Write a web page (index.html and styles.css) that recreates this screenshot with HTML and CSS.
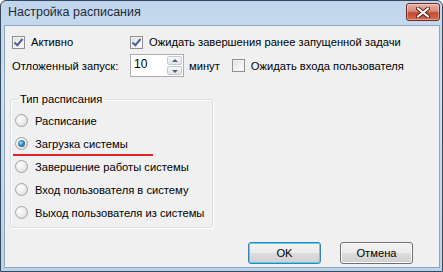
FILE: index.html
```html
<!DOCTYPE html>
<html lang="ru">
<head>
  <meta charset="UTF-8">
  <title>Настройка расписания</title>
  <link rel="stylesheet" href="styles.css">
</head>
<body>

  <div class="window">
    <!-- Заголовок окна -->
    <div class="titlebar">
      <span class="title">Настройка расписания</span>
      <div class="close-btn">
        <svg width="14" height="11" viewBox="0 0 14 11">
          <path d="M2 1.5 L12 9.5 M12 1.5 L2 9.5" stroke="#5a2019" stroke-width="4" stroke-linecap="round"/>
          <path d="M2 1.5 L12 9.5 M12 1.5 L2 9.5" stroke="#fff" stroke-width="2.2" stroke-linecap="round"/>
        </svg>
      </div>
    </div>

    <div class="client">
      <div class="row row-top">
        <label class="item item-first"><span class="checkbox checked"></span>Активно</label>
        <label class="item"><span class="checkbox checked"></span>Ожидать завершения ранее запущенной задачи</label>
      </div>

      <div class="row row-delay">
        <span class="item-first">Отложенный запуск:</span>
        <div class="spinner">
          <span class="spin-value">10</span>
          <div class="spin-buttons">
            <span class="spin-up"></span>
            <span class="spin-down"></span>
          </div>
        </div>
        <span class="unit">минут</span>
        <label class="item"><span class="checkbox"></span>Ожидать входа пользователя</label>
      </div>

      <fieldset class="group">
        <legend>Тип расписания</legend>
        <label class="radio-row"><span class="radio"></span>Расписание</label>
        <label class="radio-row marked"><span class="radio selected"></span>Загрузка системы</label>
        <label class="radio-row"><span class="radio"></span>Завершение работы системы</label>
        <label class="radio-row"><span class="radio"></span>Вход пользователя в систему</label>
        <label class="radio-row"><span class="radio"></span>Выход пользователя из системы</label>
      </fieldset>

      <div class="buttons">
        <button class="btn btn-default">OK</button>
        <button class="btn">Отмена</button>
      </div>
    </div>
  </div>

</body>
</html>
```

FILE: styles.css
```css
/* Окно в стиле Windows 7 */
body {
  margin: 0;
  padding: 0;
  background-color: #fff;
  font-family: "Liberation Sans", Arial, sans-serif;
  font-size: 11.2px;
  color: #000;
}

.window {
  width: 443px;
  height: 272px;
  box-sizing: border-box;
  border: 1px solid #34495e;
  border-radius: 6px 6px 0 0;
  background: linear-gradient(to bottom, #c0d5ec 0%, #cfdff1 30%, #bcd2ea 100%);
  display: flex;
  flex-direction: column;
}

.titlebar {
  height: 24px;
  display: flex;
  align-items: center;
  justify-content: space-between;
  padding: 0 2px 0 7px;
}

.title {
  font-size: 12.5px;
  color: #1e2b38;
  margin-top: -2px;
}

.close-btn {
  width: 32px;
  height: 16px;
  margin-top: -2px;
  border: 1px solid #6b2a22;
  border-radius: 3px;
  background: linear-gradient(to bottom, #e8b1a5 0%, #d98877 45%, #c34a34 55%, #d46b4f 100%);
  display: flex;
  align-items: center;
  justify-content: center;
  box-shadow: inset 0 0 0 1px rgba(255, 255, 255, 0.35);
}

.client {
  flex: 1;
  margin: 0 2px 3px 3px;
  border: 1px solid #8da6bf;
  background-color: #f0f0f0;
  padding: 8px 0 0 5px;
  display: flex;
  flex-direction: column;
}

.row {
  display: flex;
  align-items: center;
  padding-left: 2px;
}

.row-top {
  height: 14px;
  margin-top: 1px;
}

.row-delay {
  height: 23px;
  margin-top: 5px;
}

.item {
  display: flex;
  align-items: center;
  white-space: nowrap;
}

.item-first {
  width: 118px;
  flex-shrink: 0;
}

.checkbox {
  width: 11px;
  height: 11px;
  border: 1px solid #8e8f8f;
  background: linear-gradient(135deg, #dcdcdc 0%, #f6f6f6 70%, #fff 100%);
  box-shadow: inset 0 0 0 1px #f4f4f4;
  margin-right: 6px;
  position: relative;
}

.checkbox.checked::after {
  content: "";
  position: absolute;
  left: 3px;
  top: 0px;
  width: 3px;
  height: 7px;
  border: solid #4c61a0;
  border-width: 0 2px 2px 0;
  transform: rotate(40deg);
}

.spinner {
  width: 52px;
  height: 21px;
  border: 1px solid #abadb3;
  background-color: #fff;
  display: flex;
  justify-content: space-between;
}

.spin-value {
  padding: 2px 0 0 3px;
  font-size: 12px;
}

.spin-buttons {
  width: 15px;
  display: flex;
  flex-direction: column;
  padding: 1px;
  gap: 1px;
}

.spin-up,
.spin-down {
  flex: 1;
  border: 1px solid #c4c8cf;
  border-radius: 2px;
  background: linear-gradient(to bottom, #f7f7f7, #e1e3e7);
  position: relative;
}

.spin-up::after,
.spin-down::after {
  content: "";
  position: absolute;
  left: 4px;
  border-left: 3px solid transparent;
  border-right: 3px solid transparent;
}

.spin-up::after {
  top: 2px;
  border-bottom: 3px solid #4d6185;
}

.spin-down::after {
  top: 3px;
  border-top: 3px solid #4d6185;
}

.unit {
  margin-left: 5px;
  margin-right: 12px;
}

.group {
  width: 203px;
  box-sizing: border-box;
  margin: 15px 0 0 0;
  padding: 3px 0 3px 4px;
  border: 1px solid #d5dfe5;
  border-radius: 3px;
  box-shadow: inset 1px 1px 0 #fff, 1px 1px 0 #fff;
}

.group legend {
  padding: 0 2px;
  margin-left: 3px;
  line-height: 14px;
}

.radio-row {
  height: 23px;
  display: flex;
  align-items: center;
  white-space: nowrap;
  position: relative;
}

/* Красная линия-пометка под выбранным пунктом */
.radio-row.marked::after {
  content: "";
  position: absolute;
  left: -2px;
  top: 22px;
  width: 140px;
  height: 2px;
  background-color: #e0242b;
}

.radio {
  width: 11px;
  height: 11px;
  border: 1px solid #a2a2a2;
  border-radius: 50%;
  background: radial-gradient(circle at 35% 35%, #fff 0%, #ececec 50%, #d2d2d2 100%);
  margin-right: 7px;
  position: relative;
}

.radio.selected::after {
  content: "";
  position: absolute;
  left: 2px;
  top: 2px;
  width: 7px;
  height: 7px;
  border-radius: 50%;
  background: radial-gradient(circle at 40% 40%, #b8e1f5 0%, #3b8cc0 40%, #16466e 100%);
}

.buttons {
  margin-top: auto;
  margin-bottom: 3px;
  display: flex;
  justify-content: flex-end;
  gap: 19px;
  padding-right: 26px;
}

.btn {
  width: 73px;
  height: 22px;
  font-family: "Liberation Sans", Arial, sans-serif;
  font-size: 11.2px;
  border: 1px solid #707070;
  border-radius: 3px;
  background: linear-gradient(to bottom, #f2f2f2 0%, #ebebeb 49%, #dddddd 50%, #cfcfcf 100%);
  box-shadow: inset 0 0 0 1px #fbfbfb;
  padding: 0;
}

.btn-default {
  border-color: #3c7fb1;
  box-shadow: inset 0 0 0 1px #48d6f6;
}
```
